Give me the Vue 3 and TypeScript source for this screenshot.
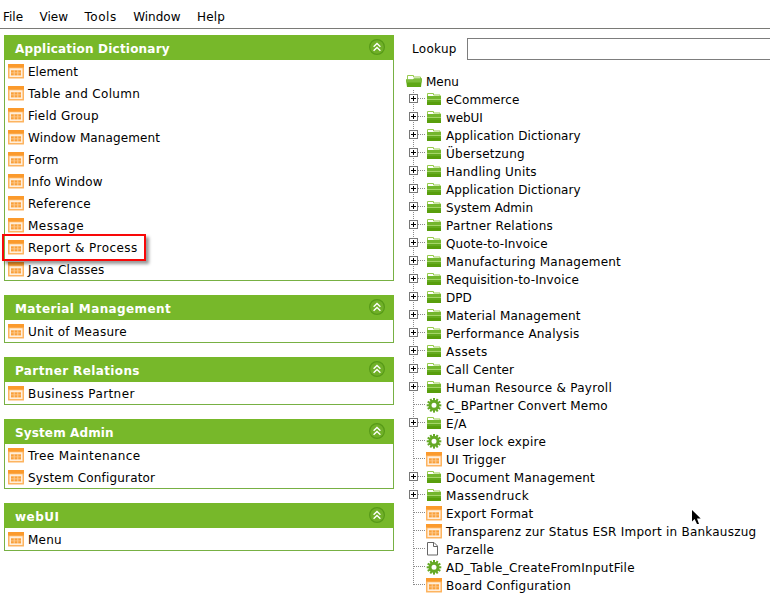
<script setup lang="ts">
import { defineComponent, h } from 'vue'

type IconKind = 'folder' | 'open' | 'gear' | 'window' | 'file'

// A label and its letter tracking in pixels.
type Label = [text: string, tracking: number]

interface Panel {
  title: Label
  items: Label[]
}

interface TreeNode {
  label: Label
  icon: IconKind
}

const menus: Label[] = [['File', 0], ['View', 0], ['Tools', 0.5], ['Window', 0], ['Help', 0.2]]
const highlighted = 'Report & Process'

const panels: Panel[] = [
  {
    title: ['Application Dictionary', 0.2],
    items: [
      ['Element', 0.03], ['Table and Column', 0.31], ['Field Group', 0.25],
      ['Window Management', 0.11], ['Form', 0.1], ['Info Window', 0.06],
      ['Reference', 0.29], ['Message', 0.49], ['Report & Process', 0.47],
      ['Java Classes', 0.18],
    ],
  },
  { title: ['Material Management', 0.39], items: [['Unit of Measure', 0.29]] },
  { title: ['Partner Relations', 0.38], items: [['Business Partner', 0.4]] },
  {
    title: ['System Admin', 0.13],
    items: [['Tree Maintenance', 0.4], ['System Configurator', 0.17]],
  },
  { title: ['webUI', 0.5], items: [['Menu', 0.2]] },
]

const node = (icon: IconKind, text: string, tracking: number): TreeNode => ({
  icon,
  label: [text, tracking],
})

const nodes: TreeNode[] = [
  node('folder', 'eCommerce', 0.11),
  node('folder', 'webUI', -0.08),
  node('folder', 'Application Dictionary', 0.11),
  node('folder', 'Übersetzung', 0.25),
  node('folder', 'Handling Units', 0.2),
  node('folder', 'Application Dictionary', 0.11),
  node('folder', 'System Admin', 0.02),
  node('folder', 'Partner Relations', 0.27),
  node('folder', 'Quote-to-Invoice', 0.09),
  node('folder', 'Manufacturing Management', 0.22),
  node('folder', 'Requisition-to-Invoice', 0.13),
  node('folder', 'DPD', 0.05),
  node('folder', 'Material Management', 0.16),
  node('folder', 'Performance Analysis', 0.21),
  node('folder', 'Assets', 0.46),
  node('folder', 'Call Center', 0.14),
  node('folder', 'Human Resource & Payroll', 0.3),
  node('gear', 'C_BPartner Convert Memo', 0.16),
  node('folder', 'E/A', 0.35),
  node('gear', 'User lock expire', 0.22),
  node('window', 'UI Trigger', 0.23),
  node('folder', 'Document Management', 0.21),
  node('folder', 'Massendruck', 0.37),
  node('window', 'Export Format', 0.16),
  node('window', 'Transparenz zur Status ESR Import in Bankauszug', 0.23),
  node('file', 'Parzelle', 0.17),
  node('gear', 'AD_Table_CreateFromInputFile', 0.27),
  node('window', 'Board Configuration', 0.24),
]

const track = (label: Label) => ({ letterSpacing: `${label[1]}px` })

const teeth = Array.from({ length: 12 }, (_, i) => i * 30)

const NodeIcon = defineComponent({
  props: { kind: { type: String, required: true } },
  setup(props) {
    const shapes: Record<string, () => unknown[]> = {
      window: () => [
        h('rect', { x: 0, y: 0, width: 16, height: 14.5, rx: 0.5, fill: '#fdb460' }),
        h('rect', { x: 0, y: 0, width: 16, height: 3.5, fill: '#fb9a2c' }),
        h('rect', { x: 1.5, y: 4.3, width: 13, height: 8.7, fill: '#ffeedb' }),
        h('rect', { x: 3, y: 6, width: 10, height: 5.5, fill: '#fdcc94' }),
        h('path', {
          d: 'M3 6.5h2.7v2H3zM6.7 6.5h2.6v2H6.7zM10.3 6.5H13v2h-2.700zM3 9.300h2.700v2H3zM6.700 9.300h2.600v2H6.700zM10.300 9.300H13v2h-2.700z',
          fill: '#f9a03a',
        }),
      ],
      folder: () => [
        h('path', { d: 'M1.500 4V1.500h6v1.500h6.500v1', fill: '#fff', stroke: '#98cb4e' }),
        h('rect', { x: 1, y: 4, width: 14, height: 3, fill: '#74b62e' }),
        h('rect', { x: 1, y: 7, width: 14, height: 1, fill: '#a5d568' }),
        h('rect', { x: 1, y: 8, width: 14, height: 2, fill: '#64aa1d' }),
        h('rect', { x: 1, y: 10, width: 14, height: 3, fill: '#589e0c' }),
      ],
      open: () => [
        h('path', { d: 'M1.500 5.500V1.500h6v1.500h7v2', fill: '#fff', stroke: '#98cb4e' }),
        h('path', { d: 'M0 5.500h7l1-1h8L15 13H1z', fill: '#5fa716' }),
        h('path', { d: 'M0 5.500h7l1-1h8l-.4 4H.4z', fill: '#7dbd3a' }),
      ],
      gear: () => [
        ...teeth.map((a) =>
          h('rect', { x: 7, y: 0, width: 2, height: 4, fill: '#65a925', transform: `rotate(${a} 8 7.300)` })),
        h('circle', { cx: 8, cy: 7.3, r: 4, fill: 'none', stroke: '#65a925', 'stroke-width': 3 }),
      ],
      file: () => [
        h('path', { d: 'M1.500.5h6.500l3.500 3.500v9h-10z', fill: '#fff', stroke: '#666' }),
        h('path', { d: 'M7.500.5v4h4', fill: 'none', stroke: '#666' }),
      ],
    }
    return () =>
      h('svg', { width: 16, height: 15, viewBox: '0 0 16 15' }, (shapes[props.kind] ?? shapes.file)() as never)
  },
})
</script>

<template>
  <div class="app">
    <nav class="menubar">
      <span v-for="m in menus" :key="m[0]" :style="track(m)">{{ m[0] }}</span>
    </nav>
    <main class="content">
      <div class="panels">
        <section v-for="p in panels" :key="p.title[0]" class="panel">
          <header class="panel-head">
            <h2 :style="track(p.title)">{{ p.title[0] }}</h2>
            <svg class="collapse" width="18" height="18" viewBox="0 0 18 18">
              <circle cx="9" cy="9" r="7.4" fill="#70b028" stroke="#579a18" stroke-width="1.2" />
              <path d="M5.600 8.700 9 5.500l3.400 3.200M5.600 12.700 9 9.500l3.400 3.200" fill="none" stroke="#fff" stroke-width="1.4" />
            </svg>
          </header>
          <ul class="panel-body">
            <li v-for="item in p.items" :key="item[0]" :class="{ marked: item[0] === highlighted }">
              <NodeIcon kind="window" />
              <span :style="track(item)">{{ item[0] }}</span>
            </li>
          </ul>
        </section>
      </div>
      <div class="side">
        <label class="lookup">
          <span>Lookup</span>
          <input type="text" />
        </label>
        <div class="root">
          <NodeIcon kind="open" />
          <span>Menu</span>
        </div>
        <ul class="tree">
          <li v-for="(n, i) in nodes" :key="i">
            <svg class="branch" width="20" height="18" viewBox="0 0 20 18" shape-rendering="crispEdges">
              <path
                :d="i === nodes.length - 1 ? 'M7.5 0V9' : 'M7.5 0V18'"
                fill="none" stroke="#8a8a8a" stroke-dasharray="1 1"
              />
              <path d="M8 8.5H19" stroke="#8a8a8a" stroke-dasharray="1 1" />
              <template v-if="n.icon === 'folder'">
                <rect x="3.5" y="4.5" width="8" height="8" fill="#fff" stroke="#777" />
                <path d="M5 8.5h5M7.5 6v5" stroke="#000" />
              </template>
            </svg>
            <NodeIcon :kind="n.icon" />
            <span :style="track(n.label)">{{ n.label[0] }}</span>
          </li>
        </ul>
      </div>
    </main>
    <svg class="pointer" width="10" height="15" viewBox="0 0 10 15">
      <path d="M0 0v11.500l2.600-2.500L5 14h2L5 8.500h3.700z" fill="#000" />
    </svg>
  </div>
</template>

<style>
body {
  margin: 0;
  background: #fff;
}
</style>

<style scoped>
.app {
  position: relative;
  width: 770px;
  height: 605px;
  overflow: hidden;
  background: #fff;
  color: #000;
  font: 12px/18px 'DejaVu Sans', sans-serif;
}
.app span,
.app h2 {
  white-space: nowrap;
}
ul {
  margin: 0;
  padding: 0;
  list-style: none;
}
svg {
  display: block;
  flex: none;
}
.menubar {
  box-sizing: border-box;
  height: 29px;
  display: flex;
  gap: 16.5px;
  padding: 8px 3px 0;
  border-bottom: 1px solid #7a7a76;
}
.content {
  display: flex;
}
.panels {
  width: 390px;
  flex: none;
  display: flex;
  flex-direction: column;
  gap: 14px;
  padding: 6px 0 0 4px;
}
.panel-head {
  height: 25px;
  box-sizing: border-box;
  display: flex;
  justify-content: space-between;
  align-items: flex-start;
  padding: 3px 8px 0 11px;
  background: #77b82a;
}
.panel-head h2 {
  margin: 2px 0 0;
  color: #fff;
  font-size: 12px;
  line-height: 18px;
  font-weight: bold;
}
.panel-body {
  border: solid #77b043;
  border-width: 0 1px 1px;
}
.panel-body li {
  height: 22px;
  display: flex;
  align-items: flex-start;
  gap: 4px;
  padding: 4px 0 0 3px;
  box-sizing: border-box;
}
.panel-body li span {
  margin-top: -1px;
}
.marked {
  position: relative;
}
.marked::after {
  content: '';
  position: absolute;
  left: -3px;
  top: -2px;
  width: 140px;
  height: 23px;
  border: 2px solid #f80808;
  box-shadow: 3px 3px 3px rgba(0, 0, 0, 0.4);
}
.side {
  flex: 1;
  min-width: 0;
  padding: 9px 0 0 12px;
}
.lookup {
  display: flex;
  align-items: center;
  gap: 10px;
  padding-left: 6px;
}
.lookup span {
  width: 45px;
  letter-spacing: 0.3px;
}
.lookup input {
  width: 330px;
  height: 22px;
  flex: none;
  box-sizing: border-box;
  margin: 0;
  padding: 0;
  border: 1px solid #7d7d7d;
  background: #fff;
}
.root,
.tree li {
  height: 18px;
  display: flex;
  align-items: flex-start;
}
.root {
  gap: 4px;
  margin-top: 12px;
}
.root svg,
.tree li svg:not(.branch) {
  margin-top: 2px;
}
.root span,
.tree li span {
  margin-top: 1px;
}
.tree li span {
  margin-left: 4px;
}
.pointer {
  position: absolute;
  left: 692px;
  top: 510px;
}
</style>
